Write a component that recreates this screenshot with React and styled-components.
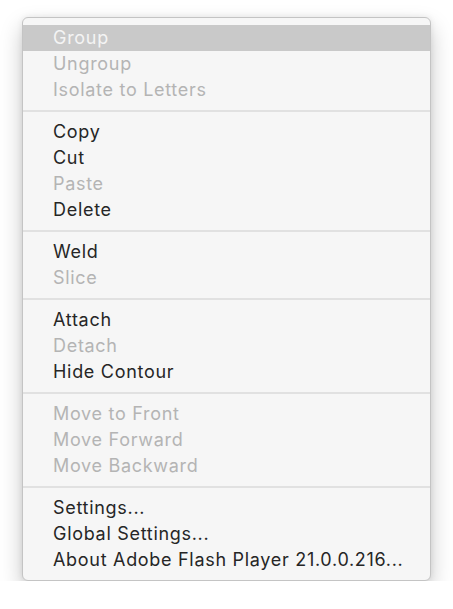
import React from 'react';
import styled, { createGlobalStyle } from 'styled-components';

const GlobalStyle = createGlobalStyle`
	body {
		margin: 0;
		background: #ffffff;
		font-family: Inter, "Liberation Sans", sans-serif;
	}
`;

const Page = styled.div`
	padding: 17px 0 0 22px;
`;

const Menu = styled.div`
	width: 407px;
	padding: 7px 0 7px;
	background-color: #f6f6f6;
	border: 1px solid #c4c4c4;
	border-radius: 6px;
	box-shadow: 0 10px 22px rgba(0, 0, 0, 0.22), 0 0 6px rgba(0, 0, 0, 0.08);
	overflow: hidden;
`;

const Item = styled.div`
	height: 26px;
	display: flex;
	align-items: center;
	padding-left: 30px;
	padding-bottom: 1px;
	box-sizing: border-box;
	font-size: 18px;
	letter-spacing: 0.7px;
	white-space: nowrap;
	background-color: ${(props) => (props.$active ? '#c9c9c9' : 'transparent')};
	color: ${(props) =>
		props.$active ? '#f4f4f4' : props.$disabled ? '#b4b4b4' : '#262626'};
`;

const Separator = styled.div`
	height: 2px;
	margin: 7px 0;
	background-color: #e1e1e1;
`;

const sections = [
	[
		{ label: 'Group', active: true },
		{ label: 'Ungroup', disabled: true },
		{ label: 'Isolate to Letters', disabled: true },
	],
	[
		{ label: 'Copy' },
		{ label: 'Cut' },
		{ label: 'Paste', disabled: true },
		{ label: 'Delete' },
	],
	[{ label: 'Weld' }, { label: 'Slice', disabled: true }],
	[
		{ label: 'Attach' },
		{ label: 'Detach', disabled: true },
		{ label: 'Hide Contour' },
	],
	[
		{ label: 'Move to Front', disabled: true },
		{ label: 'Move Forward', disabled: true },
		{ label: 'Move Backward', disabled: true },
	],
	[
		{ label: 'Settings...' },
		{ label: 'Global Settings...' },
		{ label: 'About Adobe Flash Player 21.0.0.216...' },
	],
];

const App = () => {
	return (
		<Page>
			<GlobalStyle />
			<Menu>
				{sections.map((section, index) => (
					<React.Fragment key={index}>
						{index > 0 && <Separator />}
						{section.map((item) => (
							<Item key={item.label} $active={item.active} $disabled={item.disabled}>
								{item.label}
							</Item>
						))}
					</React.Fragment>
				))}
			</Menu>
		</Page>
	);
};

export default App;
